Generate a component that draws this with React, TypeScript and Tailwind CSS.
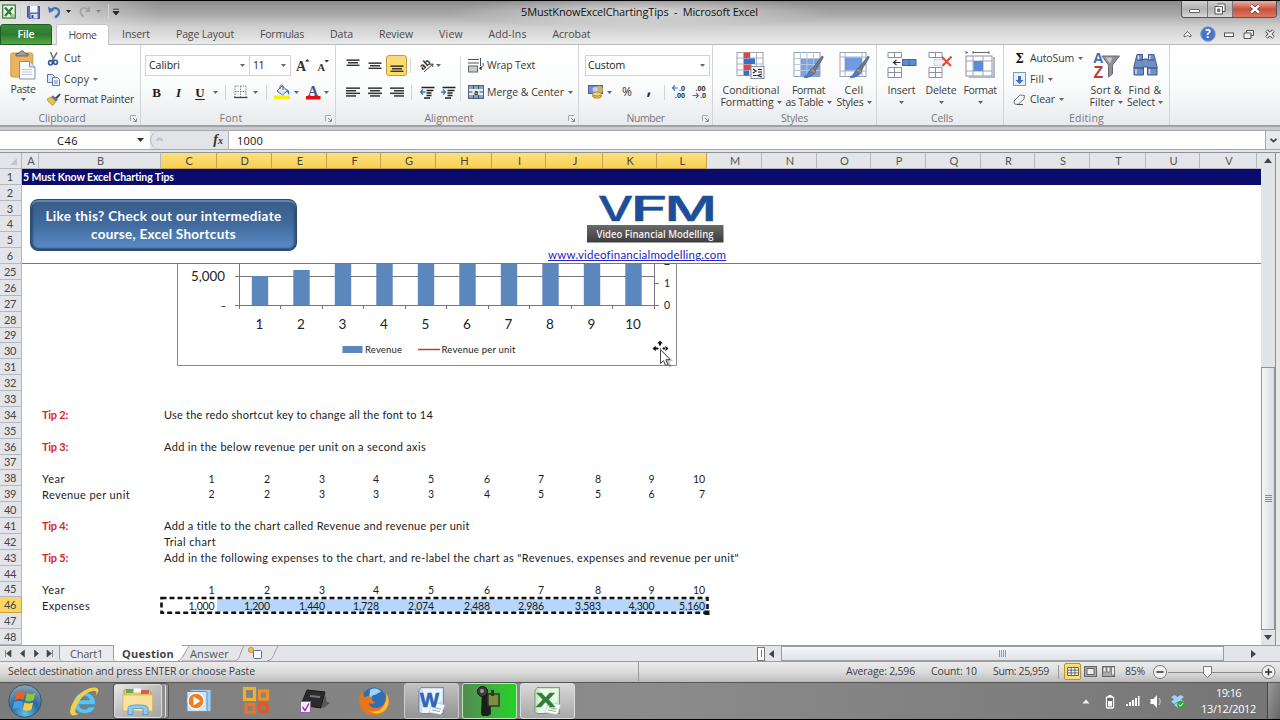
import { useLayoutEffect, useRef } from "react";
import type { ReactNode } from "react";
import clsx from "clsx";

/* Text letter-spaced so that it fills a given width. */
function Fit({ w, className, children }: { w: number; className?: string; children: string }) {
  const ref = useRef<HTMLSpanElement>(null);
  useLayoutEffect(() => {
    const el = ref.current;
    if (!el) return;
    el.style.letterSpacing = "0px";
    const natural = el.getBoundingClientRect().width;
    el.style.letterSpacing = `${(w - natural) / children.length}px`;
  }, [w, children]);
  return (
    <span ref={ref} className={clsx("inline-block shrink-0 whitespace-pre", className)}>
      {children}
    </span>
  );
}

function Caret({ className }: { className?: string }) {
  return (
    <svg className={clsx("shrink-0", className)} width="5" height="3" viewBox="0 0 5 3">
      <path d="M0 0h5L2.5 3z" fill="#666" />
    </svg>
  );
}

function Slot({ className, children }: { className: string; children?: ReactNode }) {
  return <div className={clsx("flex shrink-0 items-center justify-center", className)}>{children}</div>;
}

function Sep({ className }: { className?: string }) {
  return <div className={clsx("h-[15px] w-px shrink-0 bg-[#d3d5d8]", className)} />;
}

function Launcher() {
  return (
    <svg className="absolute right-[3px] bottom-[3px]" width="7" height="7" viewBox="0 0 7 7">
      <path d="M.5 6V.5H6" fill="none" stroke="#aaa" />
      <path d="M3 3l3 3M6.5 3.5v3h-3" fill="none" stroke="#888" />
    </svg>
  );
}

function Group({ name, nameW, className, launcher, children }: { name: string; nameW: number; className: string; launcher?: boolean; children: ReactNode }) {
  return (
    <section className={clsx("relative flex h-[80px] shrink-0 flex-col border-r border-[#d2d4d7] pt-px", className)}>
      <div className="flex h-[65px]">{children}</div>
      <div className="flex h-[14px] items-center justify-center text-[#75787d]">
        <Fit w={nameW}>{name}</Fit>
      </div>
      {launcher && <Launcher />}
    </section>
  );
}

/* ---------- title bar ---------- */

function TitleBar() {
  return (
    <header className="relative flex h-[23px] items-start">
      <div className="flex h-[21px] flex-1 items-center pl-[2px]">
        <svg width="14" height="15" viewBox="0 0 14 15">
          <rect x=".7" y="1" width="12.6" height="13" fill="#eef6ec" stroke="#3b7d3c" strokeWidth="1.3" />
          <path d="M3 3.5l7.5 8.5M10.5 3.5L3 12" stroke="#2f7f35" strokeWidth="2.3" />
          <path d="M9 10h4v3H8z" fill="#9cc79a" />
        </svg>
        <Sep className="ml-[4px] bg-[#a9a9a9]" />
        <svg className="ml-[6px]" width="14" height="14" viewBox="0 0 14 14">
          <path d="M.5 1.5h12v12H2l-1.500-1.500z" fill="#6468bd" stroke="#4a4f9c" />
          <rect x="3" y="1" width="7.500" height="6.500" fill="#f5f6fb" />
          <rect x="3.500" y="9" width="7" height="4.500" fill="#dfe1f0" />
          <rect x="4.500" y="10" width="2" height="3" fill="#3f4390" />
        </svg>
        <svg className="ml-[7px]" width="13" height="14" viewBox="0 0 13 14">
          <path d="M3 5c4-3.500 8.500-1.500 8 2.500-.3 2-1.500 3.500-4 5" fill="none" stroke="#3e6fc4" strokeWidth="2.200" />
          <path d="M0 1.500l1 6.500 5-2.500z" fill="#3e6fc4" />
        </svg>
        <svg className="ml-[5px]" width="5" height="3" viewBox="0 0 5 3"><path d="M0 0h5L2.5 3z" fill="#222" /></svg>
        <svg className="ml-[8px]" width="12" height="13" viewBox="0 0 12 13">
          <path d="M9 5C5.500 1 1 3 1.500 7c.2 2 1.500 3.500 3 4.500" fill="none" stroke="#a0a0a0" strokeWidth="1.600" />
          <path d="M11 1v6H6z" fill="#a0a0a0" />
        </svg>
        <Caret className="ml-[5px] opacity-60" />
        <Sep className="ml-[7px] h-[12px] bg-[#777]" />
        <svg className="ml-[3px]" width="8" height="8" viewBox="0 0 8 8">
          <path d="M1 1.200h6M1 3.500h6L4 7z" fill="#222" stroke="#222" strokeWidth=".8" />
        </svg>
      </div>
      <h1 className="flex h-[21px] items-center text-[11px] text-[#111]">
        <Fit w={237}>5MustKnowExcelChartingTips  -  Microsoft Excel</Fit>
      </h1>
      <div className="flex flex-1 justify-end pr-[3px]">
        <div className="flex h-[17px] overflow-hidden rounded-b-[4px] border border-t-0 border-[#555]">
          <Slot className="w-[26px] border-r border-[#777] bg-linear-to-b from-[#d0d0d0] via-[#b2b2b2] to-[#d8d8d8]">
            <div className="mt-[3px] h-[4px] w-[11px] rounded-[1px] border border-[#666] bg-white" />
          </Slot>
          <Slot className="w-[25px] border-r border-[#777] bg-linear-to-b from-[#d0d0d0] via-[#b2b2b2] to-[#d8d8d8]">
            <svg width="12" height="12" viewBox="0 0 12 12">
              <path d="M3.500 1h7.500v7.500H9M1 3.500h7.500V11H1z" fill="#fff" stroke="#555" />
              <rect x="3.500" y="6" width="2.500" height="2.500" fill="#777" stroke="#555" strokeWidth=".6" />
            </svg>
          </Slot>
          <Slot className="w-[43px] bg-linear-to-b from-[#e6b0a6] via-[#c9503b] to-[#dc7860]">
            <svg width="12" height="10" viewBox="0 0 12 10">
              <path d="M2 1.500l8 7M10 1.500l-8 7" stroke="#5a3a38" strokeWidth="3.800" />
              <path d="M2 1.500l8 7M10 1.500l-8 7" stroke="#fff" strokeWidth="2.400" />
            </svg>
          </Slot>
        </div>
      </div>
    </header>
  );
}

const tabs: { name: string; w: number; cls: string }[] = [
  { name: "Insert", w: 28, cls: "w-[54px]" },
  { name: "Page Layout", w: 58, cls: "w-[84px]" },
  { name: "Formulas", w: 44, cls: "w-[70px]" },
  { name: "Data", w: 23, cls: "w-[49px]" },
  { name: "Review", w: 34, cls: "w-[60px]" },
  { name: "View", w: 24, cls: "w-[50px]" },
  { name: "Add-Ins", w: 38, cls: "w-[63px]" },
  { name: "Acrobat", w: 38, cls: "w-[65px]" },
];

function TabRow() {
  return (
    <nav className="flex h-[21px] border-b border-[#b9bbbe] text-[#4a4a4a]">
      <div className="flex h-[21px] w-[52px] items-center justify-center rounded-t-[3px] border border-[#1d5f22] bg-linear-to-b from-[#3c8a3d] via-[#2c7b30] to-[#58a843] font-semibold text-white">
        <Fit w={17}>File</Fit>
      </div>
      <div className="ml-[4px] flex h-[22px] w-[53px] items-center justify-center rounded-t-[3px] border border-b-0 border-[#c3c5c8] bg-white pb-px">
        <Fit w={28}>Home</Fit>
      </div>
      {tabs.map((t) => (
        <div key={t.name} className={clsx("flex items-center justify-center", t.cls)}>
          <Fit w={t.w}>{t.name}</Fit>
        </div>
      ))}
      <div className="ml-auto flex items-center">
        <svg width="100" height="18" viewBox="1180 25 100 18">
          <path d="M1184 36.500v-1.500l3.500-3.300 3.500 3.300v1.500h-2l-1.500-1.500-1.500 1.500z" fill="#fff" stroke="#555" strokeWidth=".9" />
          <circle cx="1208" cy="34" r="7.300" fill="#4677c6" stroke="#7fa0d8" />
          <text x="1208" y="38.200" textAnchor="middle" fontSize="11.500" fontWeight="bold" fill="#fff" fontFamily="Open Sans">?</text>
          <rect x="1224.500" y="33" width="9" height="3.500" fill="#fff" stroke="#555" />
          <path d="M1246.500 30.500h7v5h-3m-6.500-2.500h7v5.500h-7zm2.500-2.500v2" fill="#eee" stroke="#555" />
          <path d="M1266.500 30.500l7 7M1273.500 30.500l-7 7" stroke="#555" strokeWidth="3.600" />
          <path d="M1266.700 30.700l6.600 6.600M1273.300 30.700l-6.600 6.600" stroke="#fff" strokeWidth="1.600" />
        </svg>
      </div>
    </nav>
  );
}

/* ---------- ribbon ---------- */

function Lines({ widths, align }: { widths: number[]; align: "l" | "c" | "r" }) {
  return (
    <svg width="14" height={widths.length * 2.6} viewBox={`0 0 14 ${widths.length * 2.6}`}>
      {widths.map((w, i) => (
        <rect key={i} x={align === "l" ? 0 : align === "c" ? (14 - w) / 2 : 14 - w} y={i * 2.6 + 0.4} width={w} height="1.500" fill="#333" />
      ))}
    </svg>
  );
}

function Clipboard() {
  return (
    <Group name="Clipboard" nameW={47} launcher className="w-[141px] pr-[16px]">
      <div className="flex w-[46px] shrink-0 flex-col items-center pt-[4px]">
        <svg width="26" height="30" viewBox="0 0 26 30">
          <rect x=".8" y="3" width="22" height="24" rx="1.500" fill="#eab35c" stroke="#c9964c" />
          <path d="M6 6V3.500h3C9.500 0 14.500 0 15 3.500h3V6z" fill="#9a9da3" stroke="#55585d" strokeWidth=".8" />
          <path d="M9.500 11.500h10l5.500 5.500v12H9.500z" fill="#fbfcfe" stroke="#8190a8" />
          <path d="M19.500 11.500V17H25" fill="#dde4ef" stroke="#8190a8" />
          <path d="M12 19.500h10M12 22h10M12 24.500h10" stroke="#b9c5da" />
        </svg>
        <Fit w={25} className="mt-[4px]">Paste</Fit>
        <Caret className="mt-[3px]" />
      </div>
      <div className="flex shrink-0 flex-col pt-[2px] pl-[1px]">
        <div className="flex h-[21px] items-center gap-[4px]">
          <svg width="13" height="14" viewBox="0 0 13 14">
            <path d="M3.500 0l3.500 8.500M10 .5L5 9" stroke="#6b7683" strokeWidth="1.500" />
            <ellipse cx="3.500" cy="10.800" rx="1.900" ry="2.200" fill="none" stroke="#3452a4" strokeWidth="1.600" />
            <ellipse cx="8.500" cy="10.300" rx="1.900" ry="2" fill="none" stroke="#3452a4" strokeWidth="1.600" />
          </svg>
          <Fit w={17}>Cut</Fit>
        </div>
        <div className="flex h-[20px] items-center">
          <svg className="mr-[4px]" width="13" height="13" viewBox="0 0 13 13">
            <path d="M.5 1.500h5l2 2v6h-7z" fill="#dfe8f7" stroke="#5b74ab" />
            <path d="M5.500 4.500h5l2 2v6h-7z" fill="#eef3fc" stroke="#5b74ab" />
            <path d="M7 8h4M7 10h4" stroke="#6f8fc9" />
          </svg>
          <Fit w={25}>Copy</Fit>
          <Caret className="ml-[4px]" />
        </div>
        <div className="flex h-[21px] items-center gap-[3px]">
          <svg width="14" height="13" viewBox="0 0 14 13">
            <path d="M0 6l4-2 5 4-3 4.500C3.500 11 1 9 0 6z" fill="#e8c24d" stroke="#b18a2a" strokeWidth=".7" />
            <path d="M4 4l2-1.500 5 4-2 2z" fill="#777" />
            <path d="M8 4.500L12.500.5l1.300 1.300L10 6z" fill="#3a4f8e" />
          </svg>
          <Fit w={70}>Format Painter</Fit>
        </div>
      </div>
    </Group>
  );
}

function FontGroup() {
  return (
    <Group name="Font" nameW={23} launcher className="w-[195px] pr-[14px]">
      <div className="flex shrink-0 flex-col pl-[4px]">
        <div className="mt-[9px] flex h-[21px] items-center">
          <div className="flex h-[21px] w-[105px] items-center border border-[#cfd2d6] bg-white pl-[3px] text-[#222]">
            <Fit w={31}>Calibri</Fit>
            <Caret className="mr-[4px] ml-auto" />
          </div>
          <div className="-ml-px flex h-[21px] w-[42px] items-center border border-[#cfd2d6] bg-white pl-[3px] text-[#222]">
            <Fit w={11}>11</Fit>
            <Caret className="mr-[4px] ml-auto" />
          </div>
          <svg className="ml-[5px] overflow-visible" width="34" height="16" viewBox="0 0 34 16">
            <text x="0" y="13" fontSize="14" fontWeight="bold" fill="#333" fontFamily="Liberation Serif">A</text>
            <path d="M9 3.500h4.500L11.200 1z" fill="#333" />
            <text x="21.500" y="13" fontSize="10.500" fontWeight="bold" fill="#333" fontFamily="Liberation Serif">A</text>
            <path d="M28.500 2H33l-2.300 2.500z" fill="#333" />
          </svg>
        </div>
        <div className="mt-[6px] flex h-[20px] items-center font-['Liberation_Serif',serif] text-[13px] leading-none text-[#222]">
          <Slot className="ml-px w-[21px] font-black">B</Slot>
          <Slot className="ml-px w-[21px] font-bold italic">I</Slot>
          <Slot className="w-[22px] font-bold underline underline-offset-2">U</Slot>
          <Caret className="ml-[2px]" />
          <Sep className="ml-[7px]" />
          <svg className="ml-[8px]" width="14" height="14" viewBox="0 0 14 14">
            <path d="M1 1h11M1 1v11M12 1v11M6.500 1v11M1 6.500h11" stroke="#888" strokeDasharray="1.500 1" />
            <path d="M0 12.500h13.500" stroke="#444" strokeWidth="1.300" />
          </svg>
          <Caret className="ml-[5px]" />
          <Sep className="ml-[8px]" />
          <svg className="ml-[7px]" width="17" height="16" viewBox="0 0 17 16">
            <path d="M3 7l5-5 5.500 4.500-5 4.500z" fill="#dfe7f3" stroke="#49699e" />
            <path d="M6 5V2.500C6 .5 9 .5 9 2.500V6" fill="none" stroke="#49699e" />
            <path d="M12.500 5c2.500 1 3.500 3 2.500 6-1-1.500-2-3-2.500-6z" fill="#3566b8" />
            <rect x="0" y="11.500" width="16" height="3.800" fill="#f8ee12" />
          </svg>
          <Caret className="ml-[3px]" />
          <svg className="ml-[6px]" width="16" height="16" viewBox="0 0 16 16">
            <text x="8" y="11.500" textAnchor="middle" fontSize="14.500" fontWeight="bold" fill="#3d568e" fontFamily="Liberation Serif">A</text>
            <rect x="1" y="12" width="14.500" height="3.500" fill="#e01010" />
          </svg>
          <Caret className="ml-[3px]" />
        </div>
      </div>
    </Group>
  );
}

function Indent({ flip }: { flip?: boolean }) {
  return (
    <svg width="15" height="13" viewBox="0 0 15 13">
      <path d="M1.500 1.500h13M6.500 4.500h7M6.500 7h5M6.500 9.500h5M4 12h6" stroke="#222" strokeWidth="1.500" />
      <path d={flip ? "M0 6h4M2 3.500L4.500 6 2 8.500" : "M1 6h4.500M3 3.500L.5 6 3 8.500"} stroke="#3e78c4" strokeWidth="1.300" fill="none" />
    </svg>
  );
}

function Alignment() {
  return (
    <Group name="Alignment" nameW={49} launcher className="w-[243px] pr-[16px]">
      <div className="flex w-[124px] shrink-0 flex-col">
        <div className="mt-[9px] flex h-[21px] items-center pl-[6px]">
          <Slot className="w-[22px] pb-[6px]"><Lines widths={[13, 10, 13]} align="c" /></Slot>
          <Slot className="w-[21px]"><Lines widths={[13, 10, 13]} align="c" /></Slot>
          <Slot className="ml-px h-[21px] w-[21px] rounded-[3px] border border-[#c9983e] bg-linear-to-b from-[#fbd978] to-[#fde05e] pt-[6px]">
            <Lines widths={[13, 10, 13]} align="c" />
          </Slot>
          <Sep className="ml-[3px]" />
          <svg className="ml-[8px] overflow-visible" width="16" height="15" viewBox="0 0 16 15">
            <text x="1" y="10" fontSize="9.500" fontWeight="bold" fill="#333" fontFamily="Open Sans" transform="rotate(-40 6 8)">ab</text>
            <path d="M5 14l9-8M14 6l-3 .3M14 6l-.3 3" stroke="#444" fill="none" />
          </svg>
          <Caret className="ml-[1px]" />
        </div>
        <div className="mt-[6px] flex h-[20px] items-center pl-[6px]">
          <Slot className="w-[22px]"><Lines widths={[14, 10, 14, 10]} align="l" /></Slot>
          <Slot className="w-[21px]"><Lines widths={[14, 10, 14, 10]} align="c" /></Slot>
          <Slot className="ml-px w-[21px]"><Lines widths={[14, 10, 14, 10]} align="r" /></Slot>
          <Sep className="ml-[4px]" />
          <Slot className="ml-[5px] w-[21px]"><Indent /></Slot>
          <Slot className="w-[21px]"><Indent flip /></Slot>
        </div>
      </div>
      <div className="mt-[10px] h-[45px] w-px shrink-0 bg-[#d9dbde]" />
      <div className="flex shrink-0 flex-col pl-[7px]">
        <div className="mt-[9px] flex h-[21px] items-center gap-[3px]">
          <svg width="16" height="15" viewBox="0 0 16 15">
            <path d="M0 1.500h11M0 5h11M12.500 0v8M15 5c1 3-1 5-3 5" stroke="#555" fill="none" />
            <rect x=".5" y="8" width="9" height="6" fill="#c7cbd1" stroke="#666" />
            <path d="M13.500 8L11 10.300l2.500 2" fill="#222" />
          </svg>
          <Fit w={48}>Wrap Text</Fit>
        </div>
        <div className="mt-[6px] flex h-[20px] items-center">
          <svg className="mr-[3px]" width="16" height="14" viewBox="0 0 16 14">
            <rect x=".5" y=".5" width="15" height="13" fill="#8ea4c4" stroke="#54627a" />
            <rect x="1" y="4" width="14" height="6" fill="#e3ecf9" />
            <path d="M1 7h3.500M15 7h-3.500M5.500 0v4M10.500 0v4M5.500 10v4M10.500 10v4" stroke="#33507f" />
            <text x="8" y="9.500" textAnchor="middle" fontSize="7" fontWeight="bold" fill="#222" fontFamily="Open Sans">a</text>
          </svg>
          <Fit w={77}>Merge &amp; Center</Fit>
          <Caret className="ml-[4px]" />
        </div>
      </div>
    </Group>
  );
}

function NumberGroup() {
  return (
    <Group name="Number" nameW={38} launcher className="w-[134px]">
      <div className="flex flex-col pl-[6px]">
        <div className="mt-[9px] flex h-[21px] w-[125px] items-center border border-[#cfd2d6] bg-white pl-[2px] text-[#222]">
          <Fit w={37}>Custom</Fit>
          <Caret className="mr-[4px] ml-auto" />
        </div>
        <div className="mt-[6px] flex h-[20px] items-center text-[12px] text-[#333]">
          <svg className="ml-[3px]" width="17" height="16" viewBox="0 0 17 16">
            <rect x=".5" y="1.500" width="14" height="8" fill="#6f8fd0" stroke="#44609e" />
            <ellipse cx="7.500" cy="5.500" rx="3" ry="2.500" fill="#c5d4f2" />
            <path d="M9 2c3-1 6 0 6 3.500S12 9 9 12z" fill="#e5b94a" opacity=".8" />
            <ellipse cx="9" cy="12" rx="4.500" ry="2.200" fill="#e7bd4d" stroke="#9a7420" strokeWidth=".7" />
            <ellipse cx="9" cy="10" rx="4.500" ry="2" fill="#f2d27a" stroke="#9a7420" strokeWidth=".7" />
          </svg>
          <Caret className="ml-[2px]" />
          <Slot className="ml-[4px] w-[22px]">%</Slot>
          <Slot className="w-[22px] pb-[8px] text-[17px] font-bold leading-none">,</Slot>
          <Sep className="ml-[4px]" />
          <svg className="ml-[6px] overflow-visible" width="38" height="16" viewBox="0 0 38 16">
            <g fontSize="7" fontWeight="bold" fill="#333" fontFamily="Open Sans">
              <text x="8" y="7">.0</text>
              <text x="4" y="14">.00</text>
              <text x="24.500" y="7">.00</text>
              <text x="29" y="14">.0</text>
            </g>
            <path d="M1.500 4h5.500M4 1.500L1.500 4 4 6.500M21.500 11.500h6M25 9l2.500 2.500L25 14" stroke="#3e78c4" strokeWidth="1.200" fill="none" />
          </svg>
        </div>
      </div>
    </Group>
  );
}

function BigButton({ icon, l1, w1, l2, w2, className }: { icon: ReactNode; l1: string; w1: number; l2?: string; w2?: number; className: string }) {
  return (
    <div className={clsx("flex shrink-0 flex-col items-center pt-[5px]", className)}>
      <div className="flex h-[30px] items-start justify-center">{icon}</div>
      <div className="mt-[3px] flex h-[12px] items-center"><Fit w={w1}>{l1}</Fit></div>
      <div className="flex h-[12px] items-center gap-[3px]">
        {l2 && w2 && <Fit w={w2}>{l2}</Fit>}
        <Caret />
      </div>
    </div>
  );
}

function Brush() {
  return (
    <g>
      <path d="M29 5c1 0 1.500 1 1 2L22 20l-3-2z" fill="#6f7a88" stroke="#454d58" strokeWidth=".6" />
      <path d="M19 17.500l3.500 2.500c0 3-3 5-8.500 6.500-2 .5-3 .3-3-.5 4-1.500 4-6 8-8.500z" fill="#4f7fc0" stroke="#33568c" strokeWidth=".6" />
      <path d="M19 17.500l3.500 2.500-1.500 2-3.500-2.500z" fill="#c98b45" />
    </g>
  );
}

function Styles() {
  return (
    <Group name="Styles" nameW={27} className="w-[164px]">
      <BigButton className="ml-[3px] w-[70px]" l1="Conditional" w1={57} l2="Formatting" w2={53}
        icon={
          <svg width="30" height="29" viewBox="0 0 30 29">
            <rect x="1" y="1.500" width="26" height="23" fill="#fff" stroke="#9aa3b3" />
            <path d="M1 7h26M1 13h26M1 19h26M14 1v23M20.500 1v23M7.500 1v23" stroke="#a9b1c0" />
            <rect x="8" y="1.500" width="6" height="5.500" fill="#d8483f" />
            <rect x="8" y="7.500" width="11" height="5.500" fill="#3f6cc0" />
            <rect x="8" y="13.500" width="7.500" height="5.500" fill="#d8483f" />
            <rect x="8" y="19.500" width="5" height="5" fill="#3f6cc0" />
            <rect x="15" y="15.500" width="13" height="12" fill="#f3f5f8" stroke="#888f9b" />
            <path d="M17 18l3 2-3 2M17 24.500h3.500M22 18.500h4M22 21h4M26 23l-4 1.500 4 1.500" stroke="#222" strokeWidth="1.200" fill="none" />
          </svg>
        } />
      <BigButton className="w-[45px]" l1="Format" w1={33} l2="as Table" w2={38}
        icon={
          <svg width="31" height="29" viewBox="0 0 31 29">
            <rect x="1" y="1.500" width="26" height="24" fill="#fff" stroke="#9aa3b3" />
            <rect x="7.500" y="7.500" width="19.500" height="18" fill="#7ba3e0" />
            <path d="M1 7.500h26M1 13.500h26M1 19.500h26M14 1v24M20.500 1v24M7.500 1v24" stroke="#b8c5dc" />
            <Brush />
          </svg>
        } />
      <BigButton className="w-[46px]" l1="Cell" w1={19} l2="Styles" w2={27}
        icon={
          <svg width="31" height="29" viewBox="0 0 31 29">
            <rect x="1" y="1.500" width="26" height="24" fill="#fff" stroke="#9aa3b3" />
            <path d="M1 6h26M1 20h26M6 1v24M23 1v24" stroke="#a9b1c0" />
            <rect x="6" y="6.500" width="17" height="13" fill="#6f9be2" />
            <Brush />
          </svg>
        } />
    </Group>
  );
}

function Cells() {
  return (
    <Group name="Cells" nameW={22} className="w-[127px] pl-[4px]">
      <BigButton className="w-[41px]" l1="Insert" w1={28}
        icon={
          <svg width="30" height="28" viewBox="0 0 30 28">
            <path d="M1 1.500h13.500v5H1zM7.500 1.500v5M1 16.500h13.500v10H1zM1 21.500h13.500M7.500 16.500v10" fill="#fff" stroke="#8b909a" />
            <rect x="15.500" y="8.500" width="13.500" height="6" fill="#5d8bd9" stroke="#3d66ad" />
            <path d="M22 8.500v6" stroke="#3d66ad" />
            <path d="M6.500 11.500h7M9.500 9l-3 2.500 3 2.500" fill="none" stroke="#333" strokeWidth="1.200" />
          </svg>
        } />
      <BigButton className="w-[38px]" l1="Delete" w1={31}
        icon={
          <svg width="26" height="28" viewBox="0 0 26 28">
            <path d="M1 1.500h13v5H1zM7.500 1.500v5M1 16.500h13v10H1zM1 21.500h13M7.500 16.500v10" fill="#fff" stroke="#8b909a" />
            <path d="M6 8.500h9v6H6z" fill="#e9f0fb" stroke="#a9c4ea" strokeDasharray="1.500 1" />
            <path d="M14 6l9 9M23.500 5.500L14.500 15" stroke="#dd4f3e" strokeWidth="2.200" />
          </svg>
        } />
      <BigButton className="w-[40px]" l1="Format" w1={33}
        icon={
          <svg width="30" height="29" viewBox="0 0 30 29">
            <path d="M1 0v3M8 0v3M8 1.500h16M24 0v3M1 1.500h2" stroke="#666" />
            <rect x="1" y="5" width="26" height="20" fill="#fff" stroke="#8b909a" />
            <path d="M1 10h26M1 20h26M8 5v20M18 5v20" stroke="#9da5b3" />
            <rect x="8.500" y="10" width="9.500" height="10" fill="#5d8bd9" />
            <path d="M29 6v20H4" fill="none" stroke="#b3b8c1" strokeWidth="2" />
          </svg>
        } />
    </Group>
  );
}

function Editing() {
  return (
    <Group name="Editing" nameW={35} className="w-[166px]">
      <div className="flex w-[82px] flex-col pt-[2px] pl-[9px]">
        <div className="flex h-[21px] items-center">
          <Slot className="w-[13px] font-['DejaVu_Serif',serif] text-[12px] font-bold text-[#111]">Σ</Slot>
          <Fit w={44} className="ml-[4px]">AutoSum</Fit>
          <Caret className="ml-[4px]" />
        </div>
        <div className="flex h-[20px] items-center">
          <svg width="13" height="14" viewBox="0 0 13 14">
            <rect x=".5" y=".5" width="12" height="13" fill="#e9effa" stroke="#8296bd" />
            <path d="M5 4h3v4h2.500l-4 4-4-4H5z" fill="#3c6fc6" />
          </svg>
          <Fit w={14} className="ml-[4px]">Fill</Fit>
          <Caret className="ml-[4px]" />
        </div>
        <div className="flex h-[21px] items-center">
          <svg width="13" height="12" viewBox="0 0 13 12">
            <path d="M1 7l6-6 4.500.5L11 5l-6 5.500-3.500-.5z" fill="#f4f5f8" stroke="#777" />
            <path d="M4 10.500h6" stroke="#555" />
          </svg>
          <Fit w={25} className="ml-[4px]">Clear</Fit>
          <Caret className="ml-[4px]" />
        </div>
      </div>
      <BigButton className="w-[40px]" l1="Sort &" w1={31} l2="Filter" w2={25}
        icon={
          <svg className="overflow-visible" width="28" height="29" viewBox="0 0 28 29">
            <text x="1" y="12" fontSize="14.500" fontWeight="bold" fill="#3f6cb5" fontFamily="Liberation Sans">A</text>
            <text x="1.500" y="26.500" fontSize="16" fontWeight="bold" fill="#b04038" fontFamily="Liberation Sans">Z</text>
            <path d="M10 5h17.500l-7 9v9l-4 3V14z" fill="#8d8f94" stroke="#6a6c71" />
            <path d="M13.500 6.500h7l-2.500 6z" fill="#c9cbcf" />
          </svg>
        } />
      <BigButton className="w-[38px]" l1="Find &" w1={33} l2="Select" w2={28}
        icon={
          <svg width="27" height="27" viewBox="0 0 27 27">
            <path d="M5 3.500h5.500v5H12V8h3v.5h1.500v-5H22l3 12v8.500h-9.500v-8h-4v8H2v-8.500z" fill="#6f8fc6" stroke="#3f5a8f" />
            <path d="M5 9h6M16 9h6M2 17h9.500M15.500 17H25" stroke="#33466f" />
            <path d="M4 18v5M17.500 18v5M6.500 4.500v4M17.800 4.500v4" stroke="#cfdcf3" strokeWidth="1.500" />
          </svg>
        } />
    </Group>
  );
}

/* ---------- formula bar ---------- */

function FormulaBar() {
  return (
    <div className="flex h-[20px] shrink-0 border-y border-[#a5a8ac] bg-[#e2e4e8] text-[11px] text-[#111]">
      <div className="flex w-[150px] items-center bg-white">
        <Fit w={21} className="ml-[57px]">C46</Fit>
        <svg className="mr-[6px] ml-auto" width="7" height="4" viewBox="0 0 7 4"><path d="M0 0h7L3.500 4z" fill="#333" /></svg>
      </div>
      <div className="flex w-[79px] items-center rounded-l-full border-r border-l border-[#b0b3b8] bg-[#e2e4e8]">
        <svg className="ml-[4px]" width="9" height="8" viewBox="0 0 9 8"><path d="M1 5a3.500 3.500 0 017 0H5.500a1 1 0 00-2 0z" fill="#c2c5ca" /></svg>
        <span className="mr-[5px] ml-auto font-['Liberation_Serif',serif] text-[14px] leading-none font-bold text-[#333] italic">f<span className="text-[10px]">x</span></span>
      </div>
      <div className="flex flex-1 items-center bg-white pl-[8px]">
        <Fit w={26}>1000</Fit>
      </div>
      <Slot className="w-[15px] border-l border-[#a5a8ac] bg-[#e6e8eb]">
        <svg width="7" height="5" viewBox="0 0 7 5"><path d="M.5 .8l3 2.700 3-2.700" fill="none" stroke="#444" strokeWidth="1.800" /></svg>
      </Slot>
    </div>
  );
}

/* ---------- sheet ---------- */

const COLS =
  "grid grid-cols-[22px_17px_122px_55.5px_55.5px_55px_54px_55px_56px_54px_57px_53.5px_50.5px_55px_55px_54px_55px_55px_54px_55px_56px_54px_57px_4px]";
const letters = "ABCDEFGHIJKLMNOPQRSTUV".split("");

type RowData = { b?: string; bw?: number; tip?: boolean; c?: string; cw?: number; nums?: string[] };

const years = ["1", "2", "3", "4", "5", "6", "7", "8", "9", "10"];
const data: Record<number, RowData> = {
  34: { b: "Tip 2:", bw: 26, tip: true, c: "Use the redo shortcut key to change all the font to 14", cw: 269 },
  36: { b: "Tip 3:", bw: 26, tip: true, c: "Add in the below revenue per unit on a second axis", cw: 262 },
  38: { b: "Year", bw: 23, nums: years },
  39: { b: "Revenue per unit", bw: 88, nums: ["2", "2", "3", "3", "3", "4", "5", "5", "6", "7"] },
  41: { b: "Tip 4:", bw: 26, tip: true, c: "Add a title to the chart called Revenue and revenue per unit", cw: 306 },
  42: { c: "Trial chart", cw: 52 },
  43: { b: "Tip 5:", bw: 26, tip: true, c: "Add in the following expenses to the chart, and re-label the chart as \"Revenues, expenses and revenue per unit\"", cw: 575 },
  45: { b: "Year", bw: 23, nums: years },
  46: { b: "Expenses", bw: 48, nums: ["1,000", "1,200", "1,440", "1,728", "2,074", "2,488", "2,986", "3,583", "4,300", "5,160"] },
};

function RowHead({ n }: { n: number }) {
  return (
    <div className={clsx("flex items-center justify-center border-r border-b pr-px text-[11px] text-[#444]", n === 46 ? "border-[#c9a13a] bg-[#fbd663]" : "border-[#b5b8bf] bg-[#e3e4e9]")}>
      {n > 9 ? <Fit w={12}>{String(n)}</Fit> : n}
    </div>
  );
}

function Row({ n }: { n: number }) {
  const d = data[n];
  return (
    <div className={clsx(COLS, "min-h-0 leading-none")}>
      <RowHead n={n} />
      {n === 1 ? (
        <div className="col-span-23 flex items-center bg-[#0b0b6b] pl-[1px] text-[10.5px] font-bold text-white">
          <Fit w={151}>5 Must Know Excel Charting Tips</Fit>
        </div>
      ) : (
        d && (
          <>
            <div />
            <div className={clsx("flex items-center pl-[3px]", d.tip && "font-bold text-[#d8262c]")}>
              {d.b && d.bw && <Fit w={d.bw}>{d.b}</Fit>}
            </div>
            {d.c && d.cw && <div className="flex items-center pl-[3px]"><Fit w={d.cw}>{d.c}</Fit></div>}
            {d.nums?.map((v, i) => (
              <div key={i} className={clsx("flex items-center justify-end pt-px pr-[2px] text-[10.5px]", n === 46 && i > 0 && "bg-[#b7d6fb]")}>
                {v.length > 1 ? <Fit w={v.length > 2 ? 26 : 12}>{v}</Fit> : v}
              </div>
            ))}
          </>
        )
      )}
    </div>
  );
}

function Logo() {
  return (
    <svg className="absolute top-[21px] left-[586px] overflow-visible" width="138" height="53" viewBox="586 190 138 53">
      <defs>
        <linearGradient id="band" x1="0" y1="0" x2="0" y2="1">
          <stop offset="0" stopColor="#6a6a6a" />
          <stop offset="1" stopColor="#3c3c3c" />
        </linearGradient>
      </defs>
      <g fontFamily="Inter" fontWeight="500" fontSize="33.500" fill="#1c4f97" stroke="#1c4f97" strokeWidth=".5">
        <text x="0" y="0" transform="translate(598 221) scale(1.48 1)">V</text>
        <text x="0" y="0" transform="translate(630.5 221) scale(1.9 1)">F</text>
        <text x="0" y="0" transform="translate(664.5 221) scale(1.72 1)">M</text>
      </g>
      <rect x="587" y="225" width="136.500" height="17.500" fill="url(#band)" />
      <text x="596.500" y="237.500" textLength="117" lengthAdjust="spacingAndGlyphs" fontFamily="Open Sans" fontWeight="600" fontSize="11" fill="#f2f2f2">Video Financial Modelling</text>
    </svg>
  );
}

function Chart() {
  const bars = Array.from({ length: 10 }, (_, i) => ({ cx: 260 + i * 41.5, top: i === 0 ? 276 : i === 1 ? 270 : 264 }));
  return (
    <svg className="absolute top-0 left-[177px]" width="502" height="103" viewBox="177 264 502 103" fontFamily="Lato">
      <path d="M177.500 264v101.500h499V264" fill="#fff" stroke="#8a8a8a" />
      <path d="M235 276.500h420" stroke="#777" />
      {bars.map((b, i) => (
        <g key={i}>
          <rect x={b.cx - 8.2} y={b.top} width="16.400" height={305 - b.top} fill="#5b87bd" />
          <text x={b.cx - 0.500} y="329" textAnchor="middle" fontSize="13.500" fill="#222">{i + 1}</text>
        </g>
      ))}
      <path d="M239.500 264v45M235 305.500h420M654.500 264v45M655 305.500h4M655 283.500h4" stroke="#777" fill="none" />
      {bars.map((b, i) => <path key={i} d={`M${Math.floor(b.cx + 20.500)}.500 305v4`} stroke="#777" />)}
      <text x="191" y="281" fontSize="13.500" fill="#222" textLength="34" lengthAdjust="spacingAndGlyphs">5,000</text>
      <path d="M221.500 306.500h4" stroke="#444" />
      <g fontSize="10.500" fill="#222">
        <text x="664" y="264.800">2</text>
        <text x="664" y="286.800">1</text>
        <text x="664" y="309.300">0</text>
      </g>
      <rect x="342.500" y="346" width="20" height="7" fill="#5b87bd" />
      <path d="M418 349.500h22" stroke="#a1474c" strokeWidth="1.500" />
      <g fontSize="9.500" fill="#222">
        <text x="365" y="353" textLength="37" lengthAdjust="spacing">Revenue</text>
        <text x="441.500" y="353" textLength="74" lengthAdjust="spacing">Revenue per unit</text>
      </g>
    </svg>
  );
}

function Pointer() {
  return (
    <svg className="absolute top-[76px] left-[651px]" width="22" height="28" viewBox="651 340 22 28">
      <path d="M663 351l10 10-4 .5 2.500 5-2 1-2.500-5-3 2.500z" fill="#000" opacity=".25" />
      <path d="M660.500 349.500v14l3-2.800 2.200 4.800 2.300-1-2.200-4.700 4.200-.3z" fill="#fff" stroke="#333" strokeWidth=".9" />
      <path d="M660 340.500l2.800 3h-5.600zM652.500 348.500l3.200-2.800v5.600zM668.500 348.500l-3.200-2.800v5.600zM659 343h2v2.500h-2zM655 347.500h3v2h-3zM663 347.500h3v2h-3z" fill="#111" />
      <path d="M658 348.500h5" stroke="#777" strokeDasharray="1 1" />
    </svg>
  );
}

function Sheet() {
  return (
    <div className="flex h-[492px] shrink-0 bg-white font-['Lato',sans-serif] text-[11px] text-[#1c1c1c]">
      <div className="flex w-[1261px] flex-col overflow-hidden">
        <div className={clsx(COLS, "h-[16px] shrink-0 bg-[#e3e5e8] text-[11px] leading-none text-[#555]")}>
          <div className="flex items-end justify-end border-r border-b border-[#b5b8bf] pr-[4px] pb-[3px]">
            <svg width="7" height="7" viewBox="0 0 7 7"><path d="M7 0v7H0z" fill="#c3c6cb" /></svg>
          </div>
          {letters.map((l, i) => (
            <div key={l} className={clsx("flex items-center justify-center border-r border-b pb-px pl-[2px]", i > 1 && i < 12 ? "border-[#c5a14b] bg-linear-to-b from-[#fde07c] to-[#f8cf52] text-[#444]" : "border-[#b5b8bf]")}>{l}</div>
          ))}
          <div className="border-b border-[#b5b8bf]" />
        </div>
        <div className="relative h-[95px] shrink-0 border-b border-[#777]">
          <div className="grid h-[95px] grid-rows-[repeat(6,minmax(0,1fr))]">
            {[1, 2, 3, 4, 5, 6].map((n) => <Row key={n} n={n} />)}
          </div>
          <div className="absolute top-[30px] left-[30px] flex h-[52px] w-[267px] flex-col items-center justify-center rounded-[8px] border border-[#2d4a6d] bg-linear-to-b from-[#365b87] via-[#426c9f] to-[#5c8cc6] text-[13.500px] leading-[18.500px] font-bold text-white shadow-[inset_0_2px_1px_rgba(120,160,205,0.7),inset_0_-2px_2px_rgba(30,60,100,0.7),inset_2px_0_2px_rgba(30,60,100,0.6),inset_-2px_0_2px_rgba(30,60,100,0.6)]">
            <Fit w={236}>Like this? Check out our intermediate</Fit>
            <Fit w={145}>course, Excel Shortcuts</Fit>
          </div>
          <Logo />
          <a className="absolute top-[79px] left-[548px] flex text-[11.500px] leading-[14px] text-[#2222c8]">
            <Fit w={178} className="underline">www.videofinancialmodelling.com</Fit>
          </a>
        </div>
        <div className="relative h-[381px] shrink-0">
          <div className="grid h-full grid-rows-[repeat(24,minmax(0,1fr))]">
            {Array.from({ length: 24 }, (_, i) => <Row key={i} n={25 + i} />)}
          </div>
          <Chart />
          <svg className="absolute top-[332px] left-[159px]" width="551" height="19" viewBox="159 596 551 19">
            <rect x="161.500" y="598" width="546" height="14.700" fill="none" stroke="#fff" strokeWidth="2.600" />
            <rect x="161.500" y="598" width="546" height="14.700" fill="none" stroke="#111" strokeWidth="2.600" strokeDasharray="5 3" />
            <rect x="704.500" y="610.500" width="5" height="4.500" fill="#111" />
          </svg>
          <Pointer />
        </div>
      </div>
      <div className="flex w-[15px] flex-col border-r border-[#8d9095] bg-[#e0e3e7]">
        <Slot className="h-[15px]"><svg width="8" height="5" viewBox="0 0 8 5"><path d="M0 5h8L4 0z" fill="#444" /></svg></Slot>
        <Slot className="mt-[199px] h-[263px] w-[14px] border border-[#8f9399] bg-linear-to-r from-[#f4f6f8] to-[#d9dde3]">
          <svg width="7" height="7" viewBox="0 0 7 7"><path d="M0 .5h7M0 2.500h7M0 4.500h7M0 6.500h7" stroke="#8b8f95" /></svg>
        </Slot>
        <Slot className="h-[15px]"><svg width="8" height="5" viewBox="0 0 8 5"><path d="M0 0h8L4 5z" fill="#444" /></svg></Slot>
      </div>
      <div className="flex-1 bg-[#e8e8e8]" />
    </div>
  );
}

/* ---------- sheet tabs, status bar ---------- */

function SheetTabs() {
  return (
    <div className="flex h-[17px] shrink-0 border-y border-[#9a9da2] bg-[#e3e5e9] text-[11px] leading-none text-[#555]">
      <svg width="59" height="15" viewBox="0 646 59 15">
        <path d="M5.500 650v7M11 650l-4.500 3.500 4.500 3.500zM24.500 650l-4 3.500 4 3.500zM34.500 650l4 3.500-4 3.500zM47 650l4.500 3.500-4.500 3.500zM52.500 650v7" fill="#444" stroke="#444" strokeWidth=".6" />
      </svg>
      <div className="flex w-[54px] items-center justify-center rounded-bl-[4px] border-l border-[#9a9da2] bg-[#e9ebee]">
        <Fit w={33}>Chart1</Fit>
      </div>
      <div className="-mt-px flex h-[16px] w-[69px] items-center justify-center rounded-b-[3px] border-l border-[#9a9da2] bg-white pt-px font-bold text-[#444]">
        <Fit w={52}>Question</Fit>
      </div>
      <div className="relative flex w-[96px] items-center">
        <svg className="absolute top-0 left-0 overflow-visible" width="96" height="15" viewBox="0 0 96 15">
          <path d="M-2 0h9L-4 15z" fill="#fff" />
          <path d="M7 0C3 6 1 13-4 15M62 0C58 6 58 14 53 15H0M96 0C92 6 92 14 85 15" fill="none" stroke="#9a9da2" />
          <rect x="71.500" y="4.500" width="8" height="8" rx="1" fill="#fff" stroke="#5469a5" />
          <circle cx="69" cy="4" r="2.600" fill="#f2c14e" stroke="#c07f2e" strokeWidth=".8" />
        </svg>
        <Fit w={39} className="ml-[8px]">Answer</Fit>
      </div>
      <div className="ml-auto flex w-[523px] items-center">
        <div className="flex h-[14px] w-[8px] items-center justify-center border border-[#777] bg-white"><div className="h-[7px] w-px bg-[#777]" /></div>
        <svg className="ml-[4px]" width="5" height="8" viewBox="0 0 5 8"><path d="M5 0v8L0 4z" fill="#444" /></svg>
        <Slot className="ml-[7px] h-[15px] w-[443px] border border-[#9a9da2] bg-linear-to-b from-[#f7f8fa] to-[#dfe2e6]">
          <svg width="8" height="7" viewBox="0 0 8 7"><path d="M.5 0v7M2.500 0v7M4.500 0v7M6.500 0v7" stroke="#999" /></svg>
        </Slot>
        <svg className="ml-[27px]" width="5" height="8" viewBox="0 0 5 8"><path d="M0 0v8l5-4z" fill="#444" /></svg>
      </div>
    </div>
  );
}

function StatusBar() {
  return (
    <footer className="flex h-[20px] shrink-0 items-center bg-linear-to-b from-[#ececec] via-[#dcdcdc] to-[#bcbcbc] pb-px text-[#3e3e3e]">
      <Fit w={247} className="ml-[8px]">Select destination and press ENTER or choose Paste</Fit>
      <div className="ml-[383px] h-full w-px bg-[#999]" />
      <Fit w={69} className="ml-[207px]">Average: 2,596</Fit>
      <Fit w={46} className="ml-[16px]">Count: 10</Fit>
      <Fit w={56} className="ml-[16px]">Sum: 25,959</Fit>
      <div className="ml-[9px] h-[14px] w-px bg-[#999]" />
      <Slot className="ml-[5px] h-[17px] w-[17px] rounded-[2px] border border-[#c28f2c] bg-[#fbdc77]">
        <svg width="12" height="9" viewBox="0 0 12 9"><path d="M.5.5h11v8H.5zM.5 3.200h11M.5 5.900h11M4.200.5v8M7.900.5v8" fill="#fff" stroke="#666" /></svg>
      </Slot>
      <svg className="ml-[3px]" width="13" height="11" viewBox="0 0 13 11"><rect x=".5" y=".5" width="12" height="10" fill="#aaa" stroke="#666" /><rect x="3" y="2.500" width="7" height="6" fill="#eee" stroke="#666" /></svg>
      <svg className="ml-[5px]" width="13" height="11" viewBox="0 0 13 11"><rect x=".5" y=".5" width="12" height="10" fill="#aaa" stroke="#666" /><path d="M1 1h3v5H1zM5 1h3v5H5zM9.500 1h3v8h-3z" fill="#eee" stroke="#666" strokeWidth=".7" /></svg>
      <Fit w={20} className="ml-[10px]">85%</Fit>
      <svg className="ml-auto" width="128" height="18" viewBox="1152 662 128 18">
        <path d="M1168 671.500h94" stroke="#8b8b8b" />
        <circle cx="1160" cy="671" r="6.500" fill="#f3f3f3" stroke="#777" />
        <path d="M1156.500 671h7" stroke="#333" strokeWidth="1.600" />
        <path d="M1203.500 665.500h8v7l-4 4-4-4z" fill="#f6f6f6" stroke="#777" />
        <circle cx="1268.500" cy="671" r="6.500" fill="#f3f3f3" stroke="#777" />
        <path d="M1265 671h7M1268.500 667.500v7" stroke="#333" strokeWidth="1.600" />
      </svg>
    </footer>
  );
}

/* ---------- taskbar ---------- */

function OfficeDoc({ letter, color, tint }: { letter: string; color: string; tint: string }) {
  return (
    <svg width="30" height="30" viewBox="0 0 30 30">
      <path d="M4 1.500h22.500v26H4l-2-2v-21z" fill={tint} stroke={color} strokeOpacity=".6" />
      <path d="M6 3h19v11L12 27H5z" fill="#fff" opacity=".6" />
      <path d="M16 16l12 3-4 9.500-12-2z" fill="#fff" stroke="#b7bcc4" strokeWidth=".7" />
      <path d="M16 21.500l8 1.700M15 24l8 1.500" stroke={color} strokeOpacity=".6" />
      <text x="3" y="20.500" fontSize="20" fontWeight="bold" fill={color} stroke={color} strokeWidth=".6" fontFamily="Liberation Sans" textLength="19" lengthAdjust="spacingAndGlyphs">{letter}</text>
    </svg>
  );
}

function Taskbar() {
  return (
    <div className="flex h-[36px] shrink-0 items-center bg-linear-to-r from-[#7b7b7b] via-[#8c8c8c] to-[#757575] text-white">
      <svg className="ml-[7px]" width="36" height="34" viewBox="0 0 36 34">
        <defs>
          <radialGradient id="orb" cx=".5" cy=".9" r=".9">
            <stop offset="0" stopColor="#59c2ee" />
            <stop offset=".5" stopColor="#2a6a9d" />
            <stop offset="1" stopColor="#8fa8b8" />
          </radialGradient>
        </defs>
        <circle cx="18" cy="17" r="16.300" fill="url(#orb)" stroke="#37566d" />
        <g transform="translate(-1.500 -2.500) scale(1.150)">
          <path d="M9.500 10c3-1.800 5-1.500 7.500-.3L15.500 16c-2.500-1.200-5-1.300-7.500.2z" fill="#e8602c" />
          <path d="M18.500 10.300c2.500 1 5 1 7.500-.4l-1.500 6.500c-2.500 1.200-5 1.200-7.500.1z" fill="#8fc43f" />
          <path d="M7.500 18c2.500-1.500 5-1.400 7.500-.2L13.500 24c-2.500-1.200-5-1.200-7.500.2z" fill="#4a9fe0" />
          <path d="M16.500 18.300c2.500 1.200 5 1.200 7.500 0L22.500 24.500c-2.500 1.300-5 1.300-7.500.1z" fill="#f8ca3c" />
        </g>
      </svg>
      <svg className="ml-[26px]" width="31" height="31" viewBox="0 0 31 31">
        <path d="M26.500 18.500H10c.5 5 7 6.500 10 2.500h6C22.500 30.500 5 30 5 16.500 5 3 27 2.500 26.500 18.500zM10.500 14h10c-.5-5-9.500-5-10 0z" fill="#5fc3f0" stroke="#2e93cb" strokeWidth=".6" />
        <path d="M29 3C25-1 13 4 7 12S-1 29 4 29.500c2 .2 4-.8 6-2C5 28 5 24 10 15.500S25 3 27 5.500c.7 1 .3 3-.5 4.500C29 7 30 4.500 29 3z" fill="#f2d04a" />
      </svg>
      <div className="ml-[13px] flex h-[36px] w-[56px] rounded-[3px] border border-[#555] bg-[#8f8f8f]">
        <div className="flex h-full w-[48px] items-center justify-center rounded-[3px] border border-[#ddd] bg-linear-to-br from-[#e9e9e9] via-[#bdbdbd] to-[#a4a4a4]">
          <svg width="32" height="28" viewBox="0 0 32 28">
            <path d="M2 3h12l2 2h13v18H2z" fill="#e9c766" stroke="#b8933a" strokeWidth=".7" />
            <path d="M4 2h7v4H4z" fill="#5cae4c" /><path d="M12 1.500h7v4h-7z" fill="#fff" /><path d="M19 3h8v4h-8z" fill="#d8604a" />
            <path d="M1 8h29.500v16H1z" fill="#f9e39c" stroke="#d5b256" strokeWidth=".7" />
            <path d="M6 27.500v-7c0-3.500 20-3.500 20 0v7h-5v-6H11v6z" fill="#8fcaf2" stroke="#4e90c4" strokeWidth=".8" />
          </svg>
        </div>
        <div className="h-full w-[4px] rounded-r-[3px] border-r border-[#ddd]" />
      </div>
      <svg className="ml-[17px]" width="28" height="26" viewBox="0 0 28 26">
        <rect x="5" y="1.500" width="20" height="22" fill="#a7cbe9" stroke="#5d93c0" />
        <rect x="1" y="3.500" width="20" height="20" rx="1" fill="#cfe4f5" stroke="#5d93c0" />
        <circle cx="10" cy="13" r="8" fill="#ef7d21" stroke="#fff" strokeWidth="1.300" />
        <path d="M7.500 8.500v9l7-4.500z" fill="#fff" />
      </svg>
      <svg className="ml-[27px]" width="30" height="30" viewBox="0 0 30 30" fill="none" strokeWidth="3.200">
        <rect x="3.500" y="2.500" width="10" height="11" stroke="#f0b130" />
        <rect x="18.500" y="5" width="8" height="8" stroke="#ef8d2c" />
        <rect x="5" y="18.500" width="8" height="8" stroke="#e8762b" />
        <rect x="18.500" y="17.500" width="8" height="8" rx="2" stroke="#dd5a25" />
      </svg>
      <svg className="ml-[28px]" width="32" height="26" viewBox="0 0 32 26">
        <path d="M8 2l18 2-4 16-20-3z" fill="#2b2b2d" stroke="#161616" />
        <path d="M26 6l2 8 3 1-5 4-4 1z" fill="#55575a" />
        <path d="M11 8l10 1" stroke="#777" strokeWidth="2" />
        <rect x="1.500" y="13.500" width="10" height="11" fill="#f4e9f8" stroke="#8d6b9d" />
        <path d="M3.500 19l2.500 3.500 4-7" stroke="#8b2fa8" fill="none" strokeWidth="1.300" />
      </svg>
      <svg className="ml-[27px]" width="32" height="32" viewBox="0 0 32 32">
        <circle cx="16" cy="15" r="12.500" fill="#2f6fb8" />
        <path d="M12 5c4-3 10-1 11 2-3 0-4 3-7 3s-2 4-5 4z" fill="#9fd3f2" />
        <path d="M4 6c-3 5-4 11-1 17 5 9 20 10 26 1 3-5 2.500-12-1-16 .5 9-2 14-9 15-5 .5-8-2-8-5 2 1 5 1 6-1-3-1-4-3-3-5-3-1-6-1-8 0 0-2-.5-4-2-6z" fill="#e8741e" />
        <path d="M28 8c1 5 0 12-5 16-4 3-9 3-12 2 6 4 13 3 17-2 4-5 3-12 0-16z" fill="#f8c03a" />
      </svg>
      <Slot className="ml-[14px] h-[36px] w-[55px] rounded-[3px] border border-[#ccc] bg-linear-to-b from-[#c2c2c2] to-[#939393]"><OfficeDoc letter="W" color="#2f66b5" tint="#cfe0f5" /></Slot>
      <Slot className="ml-[3px] h-[36px] w-[55px] rounded-[3px] border border-[#bfe8b8] bg-linear-to-r from-[#4f8a50] via-[#3fae3f] to-[#1ed321]">
        <svg width="30" height="32" viewBox="0 0 30 32">
          <path d="M7 6l8 3 1 20-3 2H7l-1-3z" fill="#1b1d1b" />
          <circle cx="7.500" cy="6.500" r="5" fill="#3b3d3b" stroke="#111" /><circle cx="7" cy="6" r="2" fill="#999" />
          <rect x="13" y="9" width="11" height="12" fill="#7c8f3e" stroke="#33361f" strokeWidth="1.500" />
          <path d="M16 5h3v6h-3z" fill="#333" />
        </svg>
      </Slot>
      <Slot className="ml-[3px] h-[36px] w-[55px] rounded-[3px] border border-[#ddd] bg-linear-to-b from-[#d9d9d9] to-[#a8a8a8]"><OfficeDoc letter="X" color="#2e8037" tint="#cde8c8" /></Slot>
      <svg className="ml-auto" width="110" height="22" viewBox="1080 690 110 22">
        <path d="M1082.500 703.500h7l-3.500-4z" fill="#f2f2f2" />
        <rect x="1106.500" y="697" width="7" height="11" rx="1" fill="#666" stroke="#fff" strokeWidth="1.300" />
        <rect x="1108.500" y="695" width="3" height="2" fill="#fff" /><rect x="1108" y="701" width="4" height="5.500" fill="#fff" />
        <path d="M1126 706v-2h2v2zM1129 706v-4h2v4zM1132 706v-6h2v6zM1135 706v-8h2v8zM1138 706v-10h1.500v10z" fill="#fff" />
        <path d="M1150.500 699h3l3.500-4v13l-3.500-4h-3z" fill="#fff" />
        <path d="M1159 698c1.500 2 1.500 5 0 7" stroke="#ddd" fill="none" />
        <path d="M1171 697l3.500-2 3 2 3-2 3.500 2-3 2.300 3 2.500-3.500 2.200-3-2.200-3 2.200-3.500-2.200 3-2.500zM1174 705l3.500-2.300 3.500 2.300-3.500 2.500z" fill="#9cd3f6" />
        <circle cx="1181" cy="704.500" r="3.800" fill="#36a63a" />
        <path d="M1179 704.500l1.500 1.700 2.700-3.300" stroke="#fff" fill="none" />
      </svg>
      <div className="flex w-[77px] flex-col items-center text-[11px] leading-[16px]">
        <Fit w={25}>19:16</Fit>
        <Fit w={55}>13/12/2012</Fit>
      </div>
      <div className="h-full w-[13px] border-l border-[#444] bg-linear-to-br from-[#9a9a9a] to-[#666]" />
    </div>
  );
}

export default function App() {
  return (
    <div className="flex h-[720px] w-[1280px] flex-col overflow-hidden border-y border-black bg-[#d5d7da] font-['Open_Sans',sans-serif] text-[10.500px] leading-none text-[#3a3a3a]">
      <div className="shrink-0 bg-[radial-gradient(ellipse_190px_15px_at_640px_11px,rgba(235,235,235,0.75),transparent),radial-gradient(ellipse_160px_50px_at_0px_10px,rgba(240,240,240,0.9),transparent),linear-gradient(to_bottom,#8d8d8d_0%,#a8a8a8_30%,#cfcfcf_58%,#ececec_100%)]">
        <TitleBar />
        <TabRow />
      </div>
      <main className="flex h-[82px] shrink-0 border-b-2 border-[#a0a3a7] bg-linear-to-b from-white via-[#fbfcfc] to-[#e8eaec]">
        <Clipboard />
        <FontGroup />
        <Alignment />
        <NumberGroup />
        <Styles />
        <Cells />
        <Editing />
      </main>
      <div className="h-[3px] shrink-0 bg-[#c9cbce]" />
      <FormulaBar />
      <div className="h-[3px] shrink-0 border-b border-[#8f9297] bg-[#e3e5e8]" />
      <Sheet />
      <SheetTabs />
      <StatusBar />
      <div className="h-px shrink-0 bg-[#555]" />
      <Taskbar />
    </div>
  );
}
